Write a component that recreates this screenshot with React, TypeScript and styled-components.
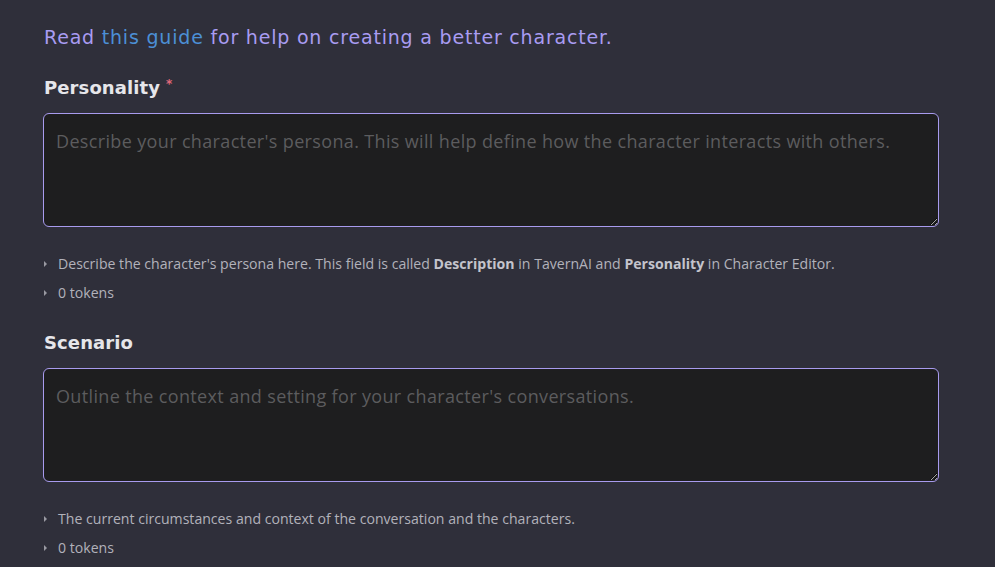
import React from "react";
import styled, { createGlobalStyle } from "styled-components";

const Global = createGlobalStyle`
  html, body { margin: 0; padding: 0; background: #2f2f3a; }
  body { font-family: "Open Sans", "Liberation Sans", sans-serif; }
  * { box-sizing: border-box; }
`;

const Page = styled.div`
  width: 995px;
  height: 567px;
  overflow: hidden;
  background: #2f2f3a;
  padding: 24px 56px 0 43px;
  display: flex;
  flex-direction: column;
`;

const Intro = styled.p`
  margin: 0 0 0 1px;
  font-family: "DejaVu Sans", sans-serif;
  font-size: 19px;
  line-height: 26px;
  color: #a99cf2;
  letter-spacing: 0.8px;
`;

const Link = styled.a`
  color: #4c8fd6;
  text-decoration: none;
`;

const Section = styled.section<{ $first?: boolean }>`
  display: flex;
  flex-direction: column;
  margin-top: ${(p) => (p.$first ? "25px" : "27px")};
`;

const Heading = styled.h2`
  margin: 0 0 12px 1px;
  font-family: "DejaVu Sans", sans-serif;
  font-weight: 600;
  font-size: 18px;
  line-height: 26px;
  color: #e6e6ea;
  letter-spacing: 0.1px;
  display: flex;
  align-items: flex-start;
  gap: 6px;
`;

const Required = styled.span`
  color: #e0697a;
  font-size: 12px;
  line-height: 16px;
  margin-top: 1px;
`;

const TextArea = styled.textarea`
  width: 896px;
  height: 114px;
  background: #1e1e1f;
  border: 1px solid #a89bee;
  border-radius: 6px;
  padding: 14px 12px;
  font-family: "Open Sans", "Liberation Sans", sans-serif;
  font-size: 18px;
  line-height: 26px;
  letter-spacing: 0.35px;
  color: #dcdcdc;
  outline: none;
  resize: vertical;
  &::placeholder {
    color: #5c5c5e;
  }
`;

const Notes = styled.ul`
  list-style: none;
  margin: 27px 0 0 0;
  padding: 0;
  display: flex;
  flex-direction: column;
  gap: 9px;
`;

const Note = styled.li`
  display: flex;
  align-items: center;
  gap: 11px;
  font-family: "Open Sans", "Liberation Sans", sans-serif;
  font-size: 14.1px;
  line-height: 20px;
  color: #b2b2ba;
  b {
    font-weight: 700;
    color: #c4c4cc;
  }
`;

const Bullet = styled.span`
  width: 0;
  height: 0;
  margin-left: 1px;
  border-top: 3px solid transparent;
  border-bottom: 3px solid transparent;
  border-left: 3px solid #9a9aa2;
`;

export default function App() {
  return (
    <>
      <Global />
      <Page>
        <Intro>
          Read <Link href="#">this guide</Link> for help on creating a better character.
        </Intro>
        <Section $first>
          <Heading>
            Personality <Required>*</Required>
          </Heading>
          <TextArea placeholder="Describe your character's persona. This will help define how the character interacts with others." />
          <Notes>
            <Note>
              <Bullet />
              <span>
                Describe the character's persona here. This field is called <b>Description</b> in TavernAI and{" "}
                <b>Personality</b> in Character Editor.
              </span>
            </Note>
            <Note>
              <Bullet />
              <span>0 tokens</span>
            </Note>
          </Notes>
        </Section>
        <Section>
          <Heading>Scenario</Heading>
          <TextArea placeholder="Outline the context and setting for your character's conversations." />
          <Notes>
            <Note>
              <Bullet />
              <span>The current circumstances and context of the conversation and the characters.</span>
            </Note>
            <Note>
              <Bullet />
              <span>0 tokens</span>
            </Note>
          </Notes>
        </Section>
      </Page>
    </>
  );
}
